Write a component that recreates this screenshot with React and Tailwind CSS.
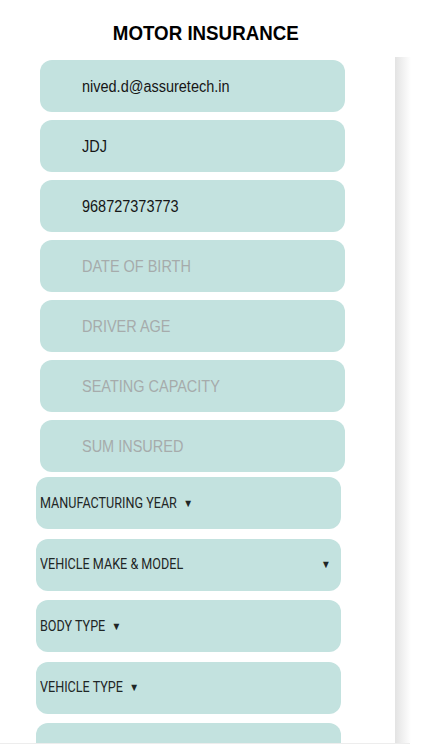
import React from 'react';

// Text inputs at the top of the form
const fields = [
  { value: 'nived.d@assuretech.in' },
  { value: 'JDJ' },
  { value: '968727373773' },
  { placeholder: 'DATE OF BIRTH' },
  { placeholder: 'DRIVER AGE' },
  { placeholder: 'SEATING CAPACITY' },
  { placeholder: 'SUM INSURED' },
];

// Picker rows below them
const pickers = [
  { label: 'MANUFACTURING YEAR' },
  { label: 'VEHICLE MAKE & MODEL', wide: true },
  { label: 'BODY TYPE' },
  { label: 'VEHICLE TYPE' },
  { label: '' },
];

const Field = ({ value, placeholder }) => (
  <div className="ml-[40px] w-[305px] h-[52px] shrink-0 rounded-[12px] bg-[#c3e2df] pl-[42px] pt-[2px] flex items-center">
    <span
      className={`inline-block origin-left scale-x-[0.905] text-[16px] whitespace-nowrap ${
        value ? 'text-[#161616]' : 'text-[#a6abab]'
      }`}
    >
      {value || placeholder}
    </span>
  </div>
);

const Picker = ({ label, wide }) => (
  <div
    className="ml-[36px] w-[305px] h-[52px] shrink-0 rounded-[12px] bg-[#c3e2df] pl-[4px] flex items-center text-[#1f2626]"
    style={{ fontFamily: 'Roboto, sans-serif' }}
  >
    {label && (
      <div
        className={`origin-left scale-x-[0.9] shrink-0 flex items-center whitespace-nowrap ${
          wide ? 'w-[323px] justify-between' : 'gap-[7px]'
        }`}
      >
        <span className="text-[14px]">{label}</span>
        <span className="text-[11px] leading-none">▼</span>
      </div>
    )}
  </div>
);

const App = () => {
  return (
    <div className="w-[422px] h-[750px] bg-white overflow-hidden flex flex-col" style={{ fontFamily: '"Liberation Sans", Arial, sans-serif' }}>
      {/* Header */}
      <div className="h-[57px] shrink-0 pt-[20px] pr-[10px] text-center">
        <h1 className="inline-block scale-x-[0.96] text-[19.5px] leading-[27px] font-bold text-black">MOTOR INSURANCE</h1>
      </div>

      {/* Scroll area */}
      <div className="flex h-[686px] shrink-0 overflow-hidden">
        <div className="w-[395px] shrink-0 pt-[3px] flex flex-col">
          <div className="flex flex-col gap-[8px]">
            {fields.map((f, i) => (
              <Field key={i} {...f} />
            ))}
          </div>
          <div className="flex flex-col gap-[9.5px] mt-[5px]">
            {pickers.map((p, i) => (
              <Picker key={i} {...p} />
            ))}
          </div>
        </div>
        <div className="w-[16px] shrink-0 bg-linear-to-r from-[#e3e3e3] to-white" />
      </div>

      <div className="w-[410px] border-t border-[#ededed]" />
    </div>
  );
};

export default App;
